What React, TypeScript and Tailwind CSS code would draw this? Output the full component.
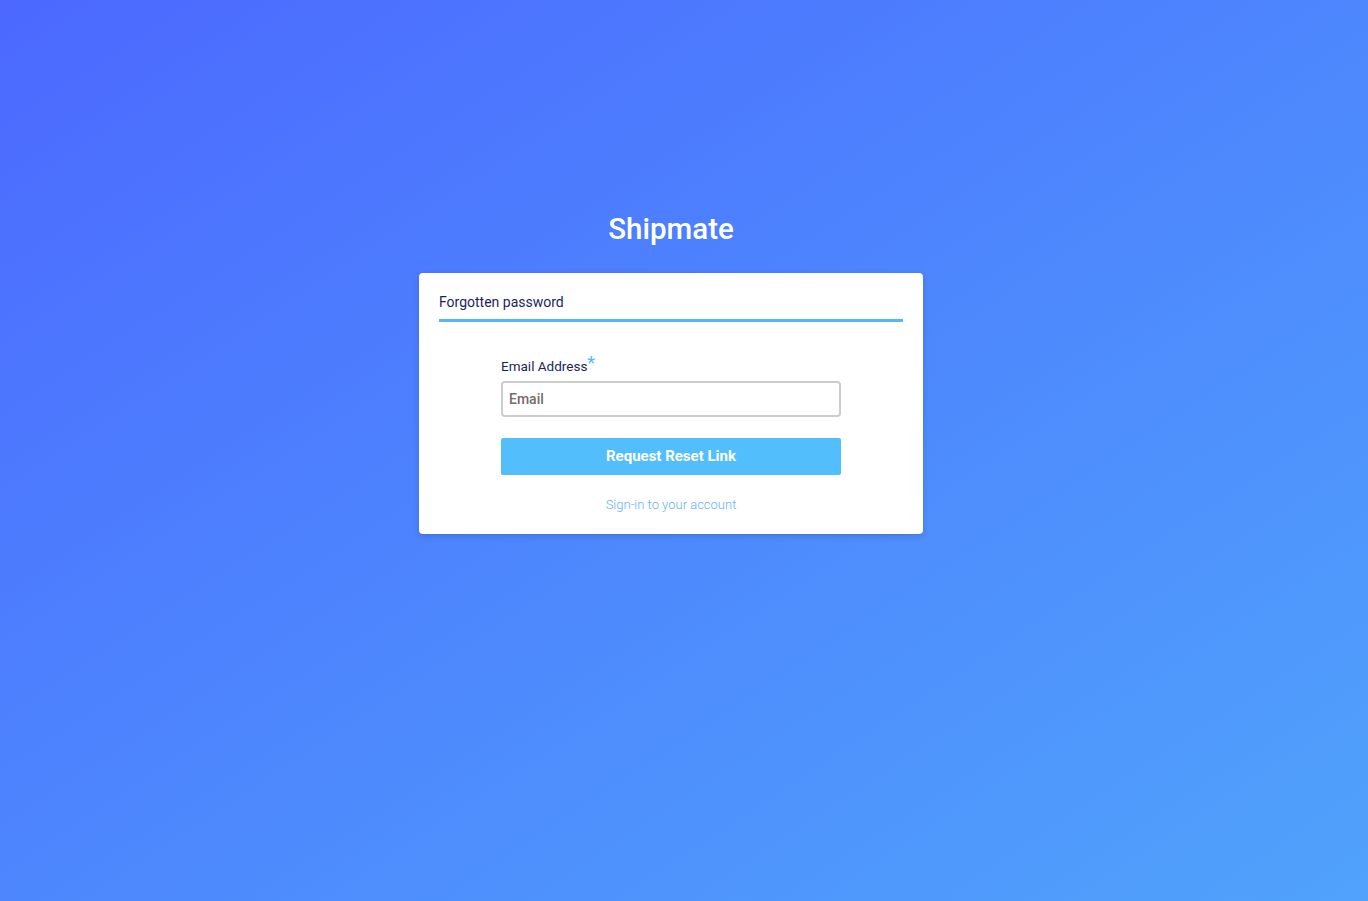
import React from "react";

export default function App() {
  return (
    <div
      className="w-full h-[901px] flex flex-col items-center pr-[26px] bg-gradient-to-br from-[#4c68ff] to-[#50a2fb]"
      style={{ fontFamily: "Roboto, 'Noto Sans', sans-serif" }}
    >
      <h1 className="mt-[210px] text-[29.5px] leading-[38px] font-medium text-white">Shipmate</h1>
      <div className="mt-[25px] w-[504px] bg-white rounded-[4px] shadow-[0_2px_6px_rgba(0,0,0,0.15)] px-5 pt-[21px] pb-[21px]">
        <div className="text-[14px] leading-[17px] text-[#1b1f5e] pb-[8px] border-b-[3px] border-[#54b9f0]">
          Forgotten password
        </div>
        <div className="w-[340px] mx-auto mt-[36px]">
          <label className="block text-[13.5px] leading-[17px] text-[#1b1f5e]">
            Email Address<span className="text-[#54b9f0] text-[18px] leading-[10px] relative top-[-2px]">*</span>
          </label>
          <input
            className="mt-[6px] w-full h-[36px] border-2 border-[#cccccc] rounded-[4px] px-[6px] text-[14px] font-medium text-[#6b6363] placeholder:text-[#756b6b] outline-none"
            placeholder="Email"
          />
          <button className="mt-[21px] w-full h-[37px] bg-[#53befc] rounded-[2px] text-white text-[15px] font-bold">
            Request Reset Link
          </button>
          <div className="mt-[21px] text-center text-[13px] leading-[17px] font-light text-[#5fb1fa]">
            Sign-in to your account
          </div>
        </div>
      </div>
    </div>
  );
}
